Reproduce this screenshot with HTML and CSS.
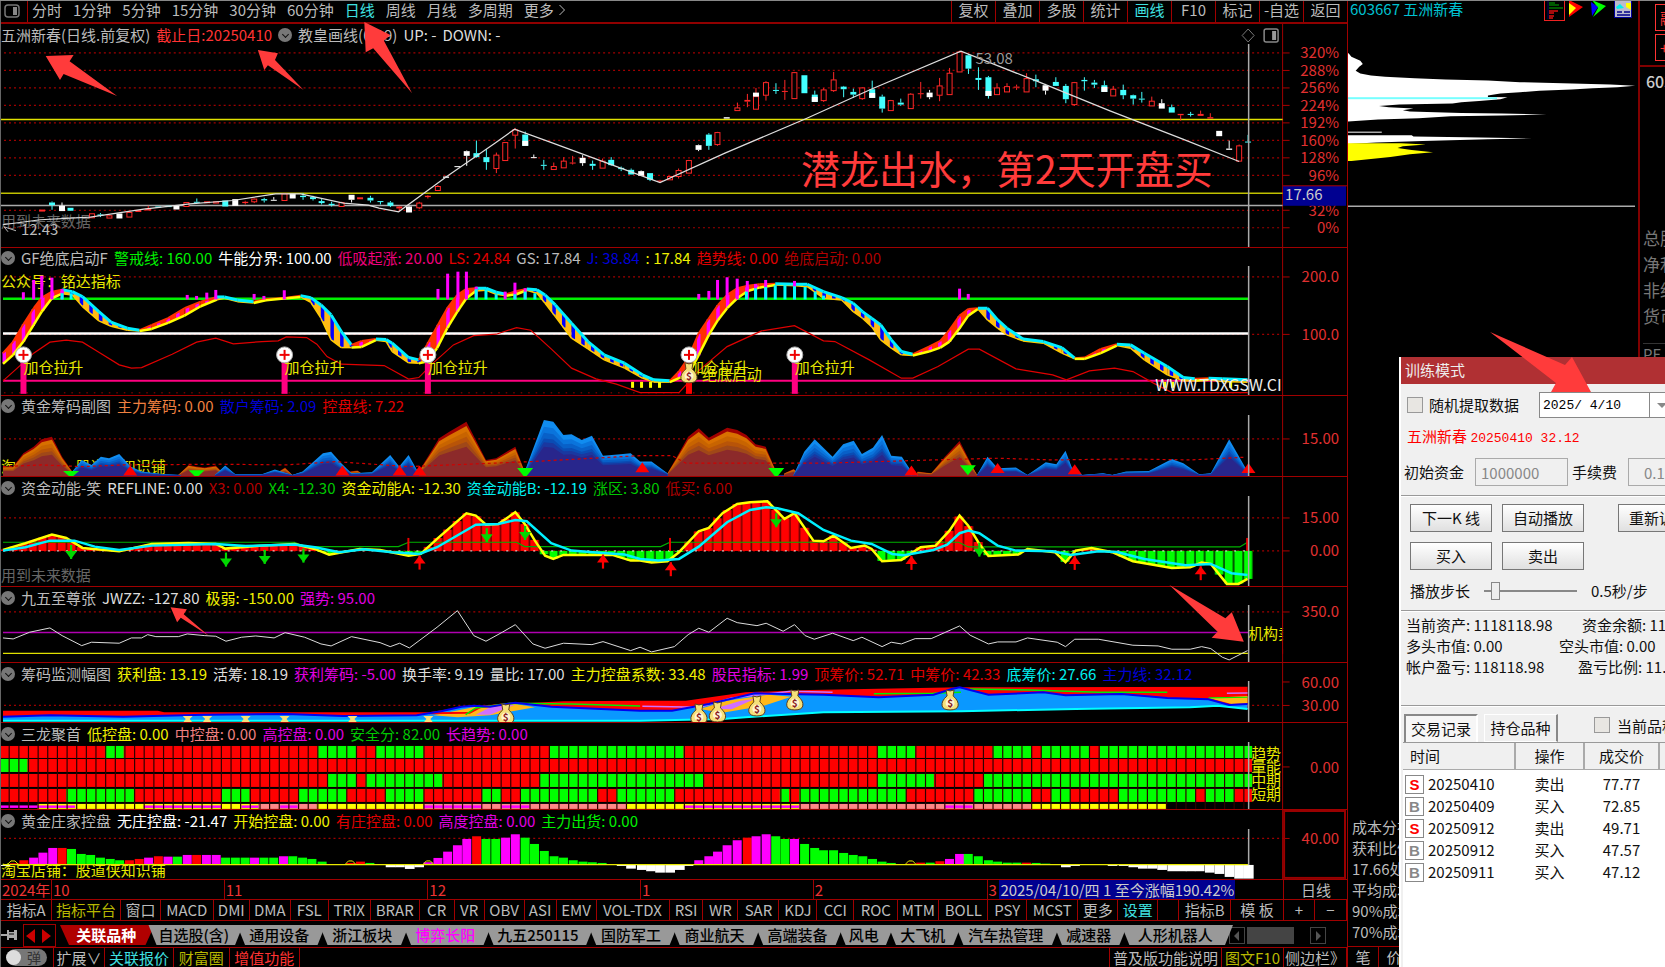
FILE: index.html
```html
<!DOCTYPE html>
<html lang="zh-CN">
<head>
<meta charset="utf-8">
<title>五洲新春 603667</title>
<link rel="stylesheet" href="styles.css">
</head>
<body>
<div class="app">
  <main class="main">
    <nav class="toolbar">
      <button class="tool-icon" aria-label="侧栏"><svg width="16" height="14" viewBox="0 0 16 14"><rect x="1" y="1" width="14" height="12" rx="3" fill="none" stroke="#777" stroke-width="1.5"/><rect x="9" y="3" width="4" height="8" fill="#888"/></svg></button>
      <div class="periods">
        <button>分时</button><button>1分钟</button><button>5分钟</button><button>15分钟</button><button>30分钟</button><button>60分钟</button><button class="c-cyan">日线</button><button>周线</button><button>月线</button><button>多周期</button><button class="more">更多<svg width="8" height="12" viewBox="0 0 8 12"><path d="M1.500 1 6.500 6 1.500 11" fill="none" stroke="#bbb"/></svg></button>
      </div>
      <div class="actions">
        <button>复权</button><button>叠加</button><button>多股</button><button>统计</button><button class="c-cyan">画线</button><button>F10</button><button>标记</button><button>-自选</button><button>返回</button>
      </div>
    </nav>
    <section class="panel p1">
      <header class="head"><span>五洲新春(日线.前复权)</span><span class="c-lred">截止日:20250410</span><button class="fold" aria-label="收起"></button><span>教皇画线(0,19)</span><span class="c-lite">UP: -</span><span class="c-lite">DOWN: -</span></header>
      <svg class="plot" id="plot1" viewBox="0 24 1348 224" preserveAspectRatio="none"></svg>
    </section>
    <section class="panel p2">
      <header class="head"><button class="fold" aria-label="收起"></button><span>GF绝底启动F</span><span class="c-green">警戒线: 160.00</span><span class="c-white">牛能分界: 100.00</span><span class="c-pink">低吸起涨: 20.00</span><span class="c-red">LS: 24.84</span><span>GS: 17.84</span><span class="c-blue">J: 38.84</span><span class="c-yellow">: 17.84</span><span class="c-red">趋势线: 0.00</span><span class="c-dred">绝底启动: 0.00</span></header>
      <svg class="plot" id="plot2" viewBox="0 248 1348 148" preserveAspectRatio="none"></svg>
    </section>
    <section class="panel p3">
      <header class="head"><button class="fold" aria-label="收起"></button><span>黄金筹码副图</span><span class="c-orange">主力筹码: 0.00</span><span class="c-blue">散户筹码: 2.09</span><span class="c-red">控盘线: 7.22</span></header>
      <svg class="plot" id="plot3" viewBox="0 396 1348 82" preserveAspectRatio="none"></svg>
    </section>
    <section class="panel p4">
      <header class="head"><button class="fold" aria-label="收起"></button><span>资金动能-笑</span><span class="c-lite">REFLINE: 0.00</span><span class="c-dred">X3: 0.00</span><span class="c-dgreen">X4: -12.30</span><span class="c-yellow">资金动能A: -12.30</span><span class="c-aqua">资金动能B: -12.19</span><span class="c-dgreen">涨区: 3.80</span><span class="c-dred">低买: 6.00</span></header>
      <svg class="plot" id="plot4" viewBox="0 478 1348 110" preserveAspectRatio="none"></svg>
    </section>
    <section class="panel p5">
      <header class="head"><button class="fold" aria-label="收起"></button><span>九五至尊张</span><span class="c-lite">JWZZ: -127.80</span><span class="c-yellow">极弱: -150.00</span><span class="c-purple">强势: 95.00</span></header>
      <svg class="plot" id="plot5" viewBox="0 588 1348 76" preserveAspectRatio="none"></svg>
    </section>
    <section class="panel p6">
      <header class="head"><button class="fold" aria-label="收起"></button><span>筹码监测幅图</span><span class="c-yellow">获利盘: 13.19</span><span class="c-lite">活筹: 18.19</span><span class="c-purple">获利筹码: -5.00</span><span class="c-lite">换手率: 9.19</span><span class="c-lite">量比: 17.00</span><span class="c-yellow">主力控盘系数: 33.48</span><span class="c-purple">股民指标: 1.99</span><span class="c-red">顶筹价: 52.71</span><span class="c-red">中筹价: 42.33</span><span class="c-aqua">底筹价: 27.66</span><span class="c-blue">主力线: 32.12</span></header>
      <svg class="plot" id="plot6" viewBox="0 664 1348 60" preserveAspectRatio="none"></svg>
    </section>
    <section class="panel p7">
      <header class="head"><button class="fold" aria-label="收起"></button><span>三龙聚首</span><span class="c-yellow">低控盘: 0.00</span><span class="c-salmon">中控盘: 0.00</span><span class="c-purple">高控盘: 0.00</span><span class="c-dgreen">安全分: 82.00</span><span class="c-purple">长趋势: 0.00</span></header>
      <svg class="plot" id="plot7" viewBox="0 724 1348 87" preserveAspectRatio="none"></svg>
    </section>
    <section class="panel p8">
      <header class="head"><button class="fold" aria-label="收起"></button><span>黄金庄家控盘</span><span class="c-white">无庄控盘: -21.47</span><span class="c-yellow">开始控盘: 0.00</span><span class="c-red">有庄控盘: 0.00</span><span class="c-purple">高度控盘: 0.00</span><span class="c-green">主力出货: 0.00</span></header>
      <svg class="plot" id="plot8" viewBox="0 811 1348 70" preserveAspectRatio="none"></svg>
    </section>
    <div class="timeline"><span>2024年</span><span>10</span><span>11</span><span>12</span><span>1</span><span>2</span><span>3</span><span class="date">2025/04/10/四 1 至今涨幅190.42%</span><span></span><span class="unit">日线</span></div>
    <nav class="indicators"><button>指标A</button><button class="c-dyellow">指标平台</button><button>窗口</button><button>MACD</button><button>DMI</button><button>DMA</button><button>FSL</button><button>TRIX</button><button>BRAR</button><button>CR</button><button>VR</button><button>OBV</button><button>ASI</button><button>EMV</button><button>VOL-TDX</button><button>RSI</button><button>WR</button><button>SAR</button><button>KDJ</button><button>CCI</button><button>ROC</button><button>MTM</button><button>BOLL</button><button>PSY</button><button>MCST</button><button>更多</button><button class="c-cyan">设置</button><span></span><button>指标B</button><button>模 板</button><button>+</button><button>−</button></nav>
    <nav class="sheets">
      <button class="pin" aria-label="固定"><svg width="18" height="14" viewBox="0 0 18 14"><path d="M0 7H6" stroke="#aaa" stroke-width="2"/><path d="M6 2H8V4H13V2H16V12H13V10H8V12H6Z" fill="#aaa"/><path d="M8 6H13" stroke="#000"/></svg></button>
      <button class="nav-arrows" aria-label="翻页"><svg width="30" height="16" viewBox="0 0 30 16"><path d="M11 1V15L2 8ZM18 1V15L27 8Z" fill="#c00"/></svg></button>
      <div class="sheet-list"><button class="active">关联品种</button><button>自选股(含)</button><button>通用设备</button><button>浙江板块</button><button class="hot">博弈长阳</button><button>九五250115</button><button>国防军工</button><button>商业航天</button><button>高端装备</button><button>风电</button><button>大飞机</button><button>汽车热管理</button><button>减速器</button><button>人形机器人</button></div>
      <div class="scroller"><button aria-label="左移"><svg width="8" height="10" viewBox="0 0 8 10"><path d="M6 0V10L1 5Z" fill="#555"/></svg></button><i class="thumb"></i><button class="right" aria-label="右移"><svg width="8" height="10" viewBox="0 0 8 10"><path d="M2 0V10L7 5Z" fill="#555"/></svg></button></div>
    </nav>
    <footer class="bottom"><label class="toggle"><input type="checkbox"><span>弹</span></label><button>扩展∨</button><button class="c-cyan">关联报价</button><button class="c-dyellow">财富圈</button><button class="c-lred">增值功能</button><span></span><button>普及版功能说明</button><button class="c-dyellow">图文F10</button><button>侧边栏》</button></footer>
  </main>

  <aside class="chips">
    <header class="chips-head"><span>603667 五洲新春</span>
      <span class="chip-icons">
        <svg width="21" height="21" viewBox="0 0 21 21"><rect x=".5" y=".5" width="20" height="20" fill="#000" stroke="#e22"/><path d="M4 1V19" stroke="#006"/><path d="M5 3H11M5 5H15M5 8H19" stroke="#070" stroke-width="1.500"/><path d="M5 11H14M5 13H10M5 16H10M5 18H9" stroke="#d11" stroke-width="1.500"/></svg>
        <svg width="15" height="17" viewBox="0 0 15 17"><path d="M1 0 15 7 1 17Z" fill="#f00"/><path d="M1 3 8 8 1 15Z" fill="#ff0"/></svg>
        <svg width="15" height="17" viewBox="0 0 15 17"><path d="M1 0 15 6 2 17 7 8Z" fill="#0f0"/><path d="M0 2 7 7 1 16Z" fill="#00f"/></svg>
        <svg width="18" height="18" viewBox="0 0 18 18"><path d="M0 0H18V18H0Z" fill="#bbc"/><path d="M0 0H18V18H0Z" fill="none" stroke="#009" stroke-width="2"/><path d="M2 7 6 4 10 8 3 9Z" fill="#0ee"/><path d="M12 3H17V10L12 7Z" fill="#ff0"/><path d="M3 12H8M10 12H16M3 15H16" stroke="#008" stroke-width="1.500"/></svg>
      </span>
    </header>
    <svg class="chip-plot" id="chips" viewBox="1348 24 292 790" preserveAspectRatio="none"></svg>
    <div class="stats"><p>成本分布</p><p>获利比例</p><p>17.66处</p><p>平均成本</p><p>90%成本</p><p>70%成本</p></div>
    <div class="chip-foot"><button>笔</button><button>价</button></div>
  </aside>

  <aside class="quote">
    <div class="quote-top"><button>融</button><button>+</button></div>
    <p class="code">603667</p>
    <div class="facts"><p>总股本</p><p>净利润</p><p>非经常</p><p>货币</p></div>
    <p class="pe">PE</p>
  </aside>

  <svg class="notes" id="notes" viewBox="0 0 1665 967" preserveAspectRatio="none"></svg>

  <section class="dialog" aria-label="训练模式">
    <h1>训练模式</h1>
    <div class="inner">
      <div class="row row-date"><input type="checkbox" id="rnd"><label for="rnd">随机提取数据</label><input class="date-box" aria-label="日期" value="2025/ 4/10"><button class="drop" aria-label="选择日期"></button></div>
      <p class="stock">五洲新春 <b>20250410 32.12</b></p>
      <div class="row row-fund"><label for="fund">初始资金</label><input id="fund" class="num" value="1000000" disabled><label for="fee">手续费</label><input id="fee" class="num fee" value="0.1" disabled></div>
      <hr>
      <div class="buttons"><button>下一K 线</button><button>自动播放</button><button class="restart">重新训练</button><button>买入</button><button>卖出</button></div>
      <div class="row row-step"><label for="step">播放步长</label><input id="step" type="range" min="0" max="100" value="8"><span>0.5秒/步</span></div>
      <hr>
      <div class="sums"><p><span>当前资产: 1118118.98</span><span>资金余额: 1118118.98</span></p><p><span>多头市值: 0.00</span><span>空头市值: 0.00</span></p><p><span>帐户盈亏: 118118.98</span><span>盈亏比例: 11.81%</span></p></div>
      <hr>
      <div class="tabs"><button class="on">交易记录</button><button>持仓品种</button><input type="checkbox" id="cur"><label for="cur">当前品种</label></div>
    </div>
    <div class="records">
      <table>
        <thead><tr><th>时间</th><th>操作</th><th>成交价</th><th></th></tr></thead>
        <tbody>
          <tr><td><i class="s">S</i>20250410</td><td>卖出</td><td>77.77</td><td></td></tr>
          <tr><td><i>B</i>20250409</td><td>买入</td><td>72.85</td><td></td></tr>
          <tr><td><i class="s">S</i>20250912</td><td>卖出</td><td>49.71</td><td></td></tr>
          <tr><td><i>B</i>20250912</td><td>买入</td><td>47.57</td><td></td></tr>
          <tr><td><i>B</i>20250911</td><td>买入</td><td>47.12</td><td></td></tr>
        </tbody>
      </table>
    </div>
  </section>
  <svg class="notes top" id="pointer" viewBox="0 0 1665 967" preserveAspectRatio="none"></svg>
</div>
<script src="charts.js"></script>
</body>
</html>
```
FILE: styles.css
```css
* { box-sizing: border-box; }
html, body { margin: 0; height: 100%; background: #000; }
body { font: 15px/20px "Noto Sans CJK SC", sans-serif; color: #bbb; overflow: hidden; }
button { font: inherit; color: inherit; background: none; border: 0; padding: 0; margin: 0; white-space: nowrap; }
p { margin: 0; }
svg { display: block; }

.app { position: relative; display: grid; grid-template-columns: minmax(0, 1fr) 292px 25px; height: 100vh; min-height: 600px; overflow: hidden; }
.app::after { content: ""; position: absolute; left: 0; right: 0; top: 0; height: 1px; background: #888; }
.main { display: flex; flex-direction: column; min-width: 0; min-height: 0; border-right: 1px solid #a00000; border-left: 1px solid #666; overflow: hidden; }

.c-cyan { color: #3fe0e0; } .c-aqua { color: #00f0f0; } .c-lred { color: #f33; } .c-red { color: #e00000; }
.c-dred { color: #b00000; } .c-green { color: #00f000; } .c-dgreen { color: #00c800; } .c-white { color: #fff; }
.c-lite { color: #ddd; } .c-pink { color: #f0007c; } .c-blue { color: #0000d8; } .c-yellow { color: #f0f000; }
.c-dyellow { color: #b8b800; } .c-orange { color: #f08040; } .c-purple { color: #e000e0; } .c-salmon { color: #f08080; }

.toolbar { flex: 0 0 24px; display: flex; border-bottom: 2px solid #900000; line-height: 20px; }
.toolbar button { height: 20px; }
.toolbar .tool-icon { height: 22px; width: 27px; padding-left: 3px; border-right: 1px solid #a00000; }
.periods { flex: 1; display: flex; gap: 11px; padding-left: 4px; min-width: 0; overflow: hidden; }
.more { display: flex; align-items: center; gap: 4px; }
.actions { display: grid; grid-template-columns: repeat(9, 44px); }
.toolbar .actions button { height: 22px; padding-bottom: 2px; border-left: 1px solid #a00000; }

.panel { position: relative; min-height: 0; overflow: hidden; }
.panel::after { content: ""; position: absolute; left: 0; right: 0; bottom: 0; height: 1px; background: #a00000; }
.p1 { flex: 224 1 0; } .p2 { flex: 148 1 0; } .p3 { flex: 82 1 0; } .p4 { flex: 110 1 0; }
.p5 { flex: 76 1 0; } .p6 { flex: 60 1 0; } .p7 { flex: 87 1 0; } .p8 { flex: 70 1 0; }
.plot { width: 100%; height: 100%; }
.head { position: absolute; left: 0; top: 0; display: flex; align-items: center; gap: 6px; height: 21px; white-space: nowrap; }
.fold { width: 14px; height: 14px; border-radius: 50%; background: #777; position: relative; }
.fold::after { content: ""; position: absolute; left: 5px; top: 4px; width: 4px; height: 4px; border: solid #111; border-width: 0 1px 1px 0; transform: rotate(45deg); }

.timeline { flex: 0 0 20px; display: grid; grid-template-columns: 50fr 173fr 204fr 213fr 173fr 174fr 12fr 237fr 48fr 64fr; color: #e33; line-height: 19px; white-space: nowrap; border-bottom: 1px solid #a00000; }
.timeline > span { min-width: 0; border-left: 1px solid #a00000; padding-left: 1px; }
.timeline > span:first-child { border: 0; }
.timeline .date { background: #000090; color: #ccc; border: 0; text-align: center; }
.timeline > span:nth-child(9) { border: 0; }
.timeline .unit { color: #bbb; text-align: center; }

.indicators { flex: 0 0 21px; display: grid; grid-template-columns: 51fr 69fr 40fr 53fr 36fr 41fr 38fr 42fr 49fr 35fr 30fr 40fr 32fr 40fr 73fr 34fr 35fr 41fr 38fr 37fr 44fr 41fr 49fr 39fr 51fr 40fr 40fr 21fr 52fr 53fr 31fr 32fr; border-bottom: 1px solid #a00000; }
.indicators > * { min-width: 0; border-right: 1px solid #a00000; overflow: hidden; display: flex; justify-content: center; line-height: 20px; }

.sheets { flex: 0 0 27px; display: flex; align-items: center; border-bottom: 1px solid #a00000; padding-top: 2px; }
.pin { width: 22px; }
.nav-arrows { width: 33px; height: 23px; border: 1px solid #a00000; padding-top: 1px; }
.sheet-list { flex: 1158; display: grid; grid-template-columns: 86fr 88fr 82fr 83fr 82fr 102fr 83fr 83fr 82fr 50fr 67fr 98fr 67fr 105fr; min-width: 0; margin: 0 4px; }
.sheet-list button { height: 20px; margin-right: -8px; padding-right: 2px; background: #999; color: #000; font-weight: 500; line-height: 20px; clip-path: polygon(0 0, 100% 0, calc(100% - 9px) 100%, 9px 100%); display: flex; justify-content: center; min-width: 0; position: relative; }
.sheet-list button + button { clip-path: polygon(2px 0, 100% 0, calc(100% - 8px) 100%, 10px 100%); }
.sheet-list .active { background: #b00000; color: #fff; font-weight: 700; }
.sheet-list .hot { color: #f0f; }
.scroller { flex: 0 0 118px; display: flex; align-items: center; gap: 2px; }
.scroller button { width: 16px; height: 17px; border: 1px solid #444; padding: 3px; }
.scroller .thumb { width: 47px; height: 17px; background: #444; }
.scroller .right { margin-left: 14px; }

.bottom { flex: 0 0 19px; display: grid; grid-template-columns: 53fr 51fr 69fr 56fr 70fr 811fr 112fr 62fr 63fr; }
.bottom > * { border-right: 1px solid #a00000; display: flex; justify-content: center; min-width: 0; line-height: 20px; height: 19px; }
.toggle { position: relative; align-items: center; }
.toggle input { position: absolute; left: 5px; top: 2px; appearance: none; margin: 0; width: 15px; height: 15px; border-radius: 50%; background: #ddd; }
.toggle span { width: 40px; height: 17px; border-radius: 9px; background: #777; color: #333; font-size: 14px; line-height: 17px; padding-left: 20px; }

.chips { display: flex; flex-direction: column; min-width: 0; border-right: 2px solid #800000; overflow: hidden; }
.chips-head { flex: 0 0 24px; display: flex; justify-content: space-between; padding-left: 2px; color: #00c0d0; line-height: 18px; }
.chip-icons { display: flex; gap: 8px; padding-right: 6px; }
.chip-icons svg:first-child { margin-right: -5px; }
.chip-plot { flex: 1; min-height: 0; width: 100%; }
.stats { padding-left: 4px; line-height: 21px; margin-bottom: 4px; }
.chip-foot { flex: 0 0 19px; display: flex; border-top: 1px solid #a00000; }
.chip-foot button { width: 31px; border-right: 1px solid #a00000; line-height: 20px; }
.quote { overflow: hidden; white-space: nowrap; color: #777; }
.quote-top { height: 67px; padding: 4px 0 0 15px; border-bottom: 2px solid #800000; }
.quote-top button { display: block; width: 30px; height: 27px; margin-bottom: 3px; border: 1px solid #f33; color: #f33; padding: 0 4px; text-align: left; }
.code { color: #ccc; padding: 4px 0 0 6px; font-size: 16px; font-weight: 500; }
.facts { padding: 134px 0 0 3px; font-size: 17px; line-height: 26px; margin-bottom: 14px; }
.pe { border-top: 1px solid #333; margin-left: 3px; }

.notes { position: absolute; left: 0; top: 0; width: 100%; height: 100%; pointer-events: none; }

.dialog { position: absolute; right: 0; top: 357px; bottom: 0; width: 266px; background: #f0f0f0; color: #111; overflow: hidden; border-left: 2px solid #fff; display: flex; flex-direction: column; }
.dialog h1 { margin: 0 0 0 -2px; padding-left: 6px; height: 27px; background: #b03033; color: #eee; font: 15px/26px "Noto Sans CJK SC", sans-serif; }
.inner { white-space: nowrap; padding-left: 2px; }
.dialog input { font: 15px/20px "Noto Sans CJK SC", sans-serif; margin: 0; }
.dialog input[type=checkbox] { appearance: none; flex: none; width: 16px; height: 16px; background: #e8e6e2; border: 1px solid #999; }
.row { display: flex; align-items: center; }
.row-date { padding: 8px 0 0 4px; gap: 6px; height: 34px; }
.dialog .date-box { margin-left: 14px; flex: none; width: 111px; height: 26px; border: 1px solid #888; padding: 0 3px; font: 13px/20px "Liberation Mono", monospace; }
.drop { flex: none; width: 26px; height: 26px; background: #fff; border: 1px solid #888; margin-left: -7px; padding: 0 0 0 7px; }
.drop::after { content: ""; display: block; width: 0; border: 5px solid transparent; border-top-color: #888; margin-top: 5px; }
.stock { color: #f00; padding: 8px 0 0 4px; }
.stock b { font: 13px/20px "Liberation Mono", monospace; }
.row-fund { gap: 4px; padding: 9px 0 0 1px; }
.dialog .num { flex: none; width: 93px; height: 28px; margin: 0 0 0 7px; border: 1px solid #aaa; background: #f0f0f0; color: #888; padding: 0 5px; }
.dialog .fee { padding-left: 15px; }
hr { margin: 9px 0 0 -2px; border: 0; border-top: 1px solid #999; border-bottom: 1px solid #fff; }
.buttons { display: grid; grid-template-columns: 82px 82px 82px; gap: 10px; padding: 7px 0 0 7px; }
.buttons button { height: 28px; border: 1px solid #777; background: linear-gradient(#fff, #e0e0e0); }
.buttons .restart { margin-left: 24px; margin-right: -24px; }
.row-step { height: 36px; padding: 5px 0 0 7px; gap: 14px; }
.row-step input { appearance: none; width: 93px; height: 18px; background: linear-gradient(#888, #888) center / 100% 2px no-repeat; }
.row-step input::-webkit-slider-thumb { appearance: none; width: 9px; height: 18px; background: #eee; border: 1px solid #888; }
.row-step + hr { margin-top: 4px; }
.sums { padding: 2px 0 0 3px; line-height: 21px; }
.sums p { display: flex; justify-content: space-between; width: 278px; }
.sums span + span { width: 102px; }
.sums p:nth-child(2) span + span { width: 125px; }
.sums p:nth-child(3) span + span { width: 106px; }
.sums + hr { margin-top: 28px; }
.tabs { display: flex; align-items: flex-end; gap: 6px; padding: 7px 0 0 1px; }
.tabs button { flex: none; width: 74px; height: 28px; line-height: 20px; border: 1px solid #fff; border-right: 2px solid #888; }
.tabs .on { border: 2px solid #888; border-right-color: #fff; border-bottom: 0; background: #f6f6f6; }
.dialog .tabs input { margin: 0 0 9px 30px; }
.tabs label { margin: 0 0 6px 1px; }
.records { flex: 1; background: #fff; border-top: 1px solid #999; margin-left: 2px; }
table { border-collapse: collapse; table-layout: fixed; width: 282px; }
th { height: 26px; padding: 0; font-weight: 400; background: #f0f0f0; border-right: 2px solid #aaa; border-bottom: 1px solid #aaa; }
th:nth-child(1) { width: 112px; text-align: left; padding-left: 7px; }
th:nth-child(2) { width: 69px; } th:nth-child(3) { width: 75px; }
td { height: 22px; padding: 0; text-align: center; line-height: 22px; }
tbody tr:first-child td { height: 25px; padding-top: 3px; }
td:first-child { text-align: left; padding-left: 2px; }
td i { display: inline-block; width: 19px; height: 19px; margin-right: 4px; border: 1px solid #888; color: #888; text-align: center; font: 700 15px/17px "Liberation Sans", sans-serif; }
td i.s { color: #f00; }
```
FILE: charts.js
```js
const NS = 'http://www.w3.org/2000/svg';
const $ = id => document.getElementById(id);
function el(svg, name, attrs, text) {
  const e = document.createElementNS(NS, name);
  for (const k in attrs) e.setAttribute(k, attrs[k]);
  if (text) e.textContent = text;
  svg.appendChild(e);
  return e;
}
const r1 = v => Math.round(v * 10) / 10;
/* Chart blocks: each holds an origin and the units per pixel of its series. */
const block = (ox, kx, oy) => list => list.map(p => [r1(ox + p[0] / kx), ...p.slice(1).map(v => typeof v === 'number' ? r1(oy + v / 3) : v)]);
const str = pts => pts.map(p => p[0] + ',' + p[1]).join(' ');
const line = (s, pts, c, w, extra) => el(s, 'polyline', Object.assign({ points: str(pts), fill: 'none', stroke: c, 'stroke-width': w }, extra));
const rect = (s, x, y, w, h, c) => el(s, 'rect', { x: r1(x), y: r1(y), width: r1(w), height: r1(h), fill: c });
const seg = (s, x1, y1, x2, y2, c, w, d) => el(s, 'line', Object.assign({ x1, y1, x2, y2, stroke: c, 'stroke-width': w || 1 }, d ? { 'stroke-dasharray': d } : {}));
const text = (s, x, y, t, c, size, a) => el(s, 'text', { x, y, fill: c, 'font-size': size || 15, 'text-anchor': a || 'start' }, t);
const poly = (s, pts, c) => el(s, 'polygon', { points: str(pts), fill: c });
const AX = 1283.5, CUR = 1249.5;
function frame(s, top, bottom, ticks) {
  ticks.forEach(([y, label]) => {
    seg(s, 3, y, AX, y, '#a00000', 1.2, '2 3');
    seg(s, AX, y, AX + 7, y, '#a00', 1);
    if (label) text(s, 1340, y + 5.5, label, '#e03030', 15, 'end');
  });
  seg(s, AX, top, AX, bottom, '#a00000', 1);
}
const cursor = (s, a, b) => seg(s, CUR, a, CUR, b, '#aaa', 1.5);
function bag(s, x, y) {
  el(s, 'path', { d: `M${x - 4} ${y - 11}Q${x} ${y - 9} ${x + 4} ${y - 11}L${x + 3} ${y - 5}Q${x + 9} ${y} ${x + 8} ${y + 5}Q${x + 7} ${y + 9} ${x} ${y + 9}Q${x - 7} ${y + 9} ${x - 8} ${y + 5}Q${x - 9} ${y} ${x - 3} ${y - 5}Z`, fill: '#f5e07a', stroke: '#60401a' });
  el(s, 'circle', { cx: x, cy: y + 2, r: 4.5, fill: '#fff3d0' });
  el(s, 'text', { x, y: y + 6, fill: '#8a2020', 'font-size': 10, 'font-weight': 700, 'text-anchor': 'middle' }, '$');
}
const interp = (pts, x, k) => {
  for (let i = 1; i < pts.length; i++) if (x <= pts[i][0]) {
    const a = pts[i - 1], b = pts[i];
    return a[k] + (b[k] - a[k]) * Math.max(0, (x - a[0]) / (b[0] - a[0] || 1));
  }
  return pts[pts.length - 1][k];
};

/* Panel 1: price */
{
  const s = $('plot1'), L = block(0, 2.8, 0), M = block(550, 2.8, 0), R = block(1105, 2.8, 0);
  frame(s, 24, 248, [[53, '320%'], [70.5, '288%'], [88, '256%'], [105.5, '224%'], [123, '192%'], [140.5, '160%'], [158, '128%'], [175.5, '96%'], [210.5, '32%'], [228, '0%']]);
  seg(s, 0, 119.5, AX, 119.5, '#e0e000', 1.5);
  seg(s, 0, 193.5, AX, 193.5, '#c0c000', 1.5);
  seg(s, 0, 205.7, AX, 205.7, '#aaa', 1.5);
  text(s, 0, 227, '用到未来数据', '#666');
  text(s, 20, 235, '12.43', '#bbb');
  line(s, [[15, 231], [3, 227], [7, 232]], '#bbb', 1);
  const candles = [...L([
    [115, 631, 631, 633, 633, 'r'], [143, 605, 608, 616, 630, 'c'], [171, 608, 618, 634, 634, 'w'], [195, 624, 624, 633, 633, 'c'], [255, 642, 642, 654, 654, 'r'], [279, 640, 644, 648, 652, 'c'], [304, 645, 648, 655, 655, 'r'], [332, 641, 641, 656, 656, 'w'], [360, 636, 638, 652, 652, 'r'], [385, 631, 632, 635, 635, 'r'], [413, 618, 626, 632, 632, 'f'], [441, 620, 620, 622, 622, 'c'], [470, 618, 618, 622, 622, 'c'], [492, 618, 618, 629, 629, 'w'], [520, 608, 608, 620, 620, 'r'], [549, 596, 606, 608, 608, 'c'], [578, 606, 606, 608, 608, 'r'], [603, 606, 606, 610, 610, 'r'], [629, 602, 602, 620, 620, 'c'], [657, 598, 598, 618, 618, 'w'], [685, 603, 606, 610, 614, 'f'], [710, 596, 598, 606, 610, 'r'], [738, 594, 598, 602, 608, 'c'], [765, 592, 600, 602, 602, 'w'], [795, 580, 582, 602, 602, 'r'], [818, 582, 582, 596, 596, 'w'], [847, 580, 588, 592, 600, 'c'], [875, 588, 592, 598, 602, 'c'], [899, 598, 604, 610, 614, 'c'], [927, 606, 612, 616, 620, 'c'], [955, 606, 608, 620, 620, 'r'], [983, 585, 585, 600, 608, 'w'], [1007, 594, 594, 596, 596, 'r'], [1036, 588, 594, 602, 608, 'c'], [1064, 604, 604, 606, 614, 'c'], [1092, 604, 608, 618, 622, 'c'], [1117, 618, 620, 626, 632, 'f'], [1144, 618, 620, 638, 638, 'w'], [1173, 606, 610, 624, 628, 'r'], [1197, 586, 588, 592, 596, 'f'], [1225, 556, 560, 572, 572, 'r'], [1248, 528, 530, 534, 534, 'w'], [1280, 499, 499, 502, 502, 'w'], [1306, 452, 454, 468, 498, 'w'], [1333, 422, 460, 472, 474, 'c'], [1361, 448, 472, 487, 510, 'c'], [1389, 458, 466, 506, 520, 'r'], [1414, 428, 428, 482, 482, 'r'], [1442, 384, 390, 406, 446, 'r'], [1470, 395, 404, 438, 438, 'x'], [1494, 464, 472, 474, 474, 'w'], [1522, 480, 495, 497, 510, 'c']
  ]), ...M([
    [10, 488, 500, 509, 509, 'r'], [38, 472, 484, 504, 504, 'r'], [63, 468, 488, 490, 494, 'f'], [91, 466, 474, 490, 498, 'w'], [119, 482, 492, 498, 510, 'c'], [147, 476, 484, 505, 505, 'r'], [171, 472, 480, 496, 498, 'c'], [199, 500, 504, 508, 514, 'c'], [227, 506, 510, 524, 524, 'c'], [255, 512, 514, 528, 528, 'w'], [280, 520, 520, 540, 544, 'c'], [308, 540, 542, 546, 546, 'f'], [336, 528, 530, 540, 540, 'r'], [360, 506, 512, 530, 536, 'r'], [389, 480, 482, 520, 520, 'r'], [416, 434, 436, 450, 454, 'w'], [445, 400, 404, 438, 450, 'c'], [469, 396, 398, 434, 438, 'r'], [495, 352, 352, 356, 356, 'w'], [525, 308, 324, 332, 332, 'r'], [553, 282, 300, 305, 322, 'f'], [577, 264, 290, 328, 328, 'r'], [577, 278, 278, 290, 290, 'w'], [605, 244, 248, 286, 302, 'r'], [633, 250, 270, 273, 282, 'c'], [658, 240, 273, 275, 300, 'f'], [685, 216, 218, 296, 296, 'r'], [713, 226, 226, 280, 280, 'c'], [742, 272, 284, 306, 306, 'x'], [767, 264, 270, 302, 306, 'r'], [795, 216, 240, 272, 276, 'r'], [823, 258, 260, 268, 292, 'c'], [850, 266, 276, 284, 294, 'c'], [875, 262, 264, 296, 300, 'r'], [903, 242, 268, 294, 294, 'x'], [931, 284, 290, 326, 338, 'c'], [955, 300, 302, 332, 332, 'r'], [983, 296, 308, 314, 318, 'c'], [1011, 280, 283, 326, 326, 'r'], [1039, 246, 280, 282, 296, 'f'], [1064, 270, 278, 292, 298, 'w'], [1092, 234, 258, 286, 304, 'r'], [1120, 204, 220, 284, 284, 'r'], [1148, 152, 156, 216, 216, 'r'], [1173, 162, 166, 206, 222, 'c'], [1201, 202, 234, 240, 270, 'c'], [1229, 228, 232, 288, 296, 'x'], [1253, 250, 264, 284, 284, 'r'], [1281, 250, 260, 276, 276, 'r'], [1308, 254, 260, 263, 270, 'f'], [1336, 220, 236, 276, 276, 'r'], [1362, 224, 238, 244, 262, 'c'], [1389, 252, 256, 272, 284, 'w'], [1418, 232, 246, 258, 258, 'c'], [1446, 252, 258, 298, 310, 'c'], [1470, 246, 248, 314, 318, 'r'], [1498, 232, 240, 244, 272, 'c'], [1526, 240, 248, 254, 264, 'c'], [1554, 242, 256, 276, 276, 'x']
  ]), ...R([
    [25, 258, 268, 288, 288, 'r'], [53, 254, 270, 286, 298, 'c'], [81, 284, 286, 296, 314, 'c'], [105, 276, 296, 298, 308, 'c'], [133, 290, 304, 318, 318, 'r'], [161, 298, 310, 326, 326, 'w'], [189, 314, 322, 338, 338, 'c'], [214, 342, 342, 346, 362, 'f'], [242, 336, 342, 345, 350, 'c'], [270, 332, 342, 348, 348, 'f'], [297, 340, 352, 356, 356, 'f'], [322, 393, 393, 409, 409, 'w'], [350, 422, 446, 450, 450, 'w'], [378, 434, 438, 484, 484, 'r'], [403, 405, 425, 428, 428, 'c']
  ])];
  const col = { r: '#ff2828', f: '#ff2828', c: '#4ff', w: '#fff', x: '#4ff' };
  candles.forEach(([x, h, a, b, l, t]) => {
    if (h < a) seg(s, x, h, x, a, col[t], 1);
    if (l > b) seg(s, x, b, x, l, col[t], 1);
    if (t === 'r') el(s, 'rect', { x: r1(x - 2.5), y: a, width: 5, height: Math.max(1, r1(b - a)), fill: '#000', stroke: col.r });
    else rect(s, x - 3, a, 6, Math.max(1, b - a), col[t]);
    if (t === 'x') rect(s, x - 3, b - 5, 6, 5, '#fff');
  });
  line(s, [...L([[5, 675], [110, 660], [250, 652], [400, 628], [530, 612], [650, 602], [770, 582], [840, 582], [960, 610], [1030, 616], [1060, 625], [1115, 636], [1250, 530], [1385, 430], [1440, 388]]), ...M([[0, 427], [160, 490], [308, 548], [490, 460], [720, 355], [900, 268], [1152, 154], [1370, 246], [1568, 332]]), ...R([[220, 418], [378, 485]])], '#ddd', 1.2);
  text(s, 976, 64, '53.08', '#999');
  cursor(s, 44, 248);
  el(s, 'path', { d: 'M1249 29 1255 35.500 1249 42 1243 35.500Z', fill: 'none', stroke: '#777' });
  el(s, 'rect', { x: 1265, y: 29, width: 14, height: 13, rx: 2, fill: 'none', stroke: '#888', 'stroke-width': 1.5 });
  rect(s, 1273, 31, 4, 9, '#999');
  rect(s, 1284, 186, 63, 20, '#000090');
  seg(s, 1284, 186, 1348, 186, '#a00', 1);
  text(s, 1286, 200, '17.66', '#ccc');
}

/* Panel 2: trend ribbon */
{
  const s = $('plot2'), L = block(0, 2.45, 245), R = block(640, 2.178, 245);
  frame(s, 248, 396, [[277, '200.0'], [334.5, '100.0']]);
  seg(s, 3, 393, CUR, 393, '#a00000', 1, '1.500 6');
  text(s, 0, 287, '公众号：铭达指标', '#e8e800');
  seg(s, 2, 298.7, CUR, 298.7, '#00f000', 2.5);
  seg(s, 2, 333.7, CUR, 333.7, '#fff', 2.5);
  seg(s, 2, 381, CUR, 381, '#ff0080', 2);
  const band = [...L([[5, 325, 357], [30, 290, 330], [55, 238, 290], [80, 190, 240], [100, 158, 200], [125, 140, 160], [150, 134, 146], [175, 140, 150], [200, 155, 185], [240, 200, 228], [270, 232, 244], [310, 250, 256], [340, 256, 258], [370, 240, 252], [410, 220, 234], [450, 190, 212], [490, 170, 184], [530, 156, 164], [548, 156, 160], [580, 165, 170], [620, 170, 174], [650, 162, 166], [700, 158, 160], [735, 152, 156], [760, 158, 172], [785, 180, 220], [810, 210, 285], [835, 260, 308], [860, 300, 308], [885, 288, 306], [920, 282, 286], [945, 284, 290], [960, 295, 320], [1000, 338, 354], [1025, 345, 355], [1045, 300, 350], [1070, 245, 310], [1095, 190, 250], [1120, 150, 200], [1142, 132, 160], [1165, 130, 138], [1190, 130, 136], [1215, 142, 148], [1240, 148, 152], [1265, 138, 148], [1290, 132, 136], [1315, 134, 145], [1335, 150, 175], [1360, 180, 215], [1400, 235, 280], [1440, 290, 312], [1480, 330, 345], [1530, 355, 370]]),
    ...R([[5, 390, 400], [30, 405, 412], [65, 408, 412], [85, 380, 400], [105, 340, 390], [128, 265, 330], [150, 220, 270], [170, 180, 225], [190, 150, 190], [212, 130, 160], [235, 122, 138], [260, 118, 128], [295, 116, 120], [340, 118, 122], [365, 118, 125], [400, 140, 160], [440, 158, 165], [465, 175, 200], [485, 200, 220], [505, 220, 245], [525, 240, 285], [548, 285, 310], [570, 320, 330], [595, 328, 332], [630, 305, 320], [655, 288, 308], [675, 255, 290], [697, 212, 250], [716, 192, 212], [737, 190, 192], [758, 190, 225], [780, 225, 250], [800, 250, 270], [835, 282, 288], [880, 290, 295], [920, 308, 325], [948, 340, 342], [970, 338, 342], [1005, 312, 325], [1040, 298, 302], [1070, 300, 310], [1100, 325, 345], [1150, 365, 390], [1185, 398, 408], [1210, 402, 408], [1240, 400, 405], [1270, 402, 410], [1325, 405, 412]])];
  const up = i => band[i][1] < band[i - 1][1];
  for (let i = 1; i < band.length; i++) {
    const a = band[i - 1], b = band[i];
    poly(s, [[a[0], a[1]], [b[0], b[1]], [b[0], b[2]], [a[0], a[2]]], up(i) ? '#ff3000' : '#ffb818');
  }
  for (let x = 3; x < CUR; x += 9.66) {
    const i = Math.max(1, band.findIndex(p => p[0] >= x));
    rect(s, x - 1.5, interp(band, x, 1), 3.5, interp(band, x, 2) - interp(band, x, 1), up(i) ? '#f0f' : '#00f');
  }
  for (let i = 1; i < band.length; i++) {
    const a = band[i - 1], b = band[i];
    if (up(i)) { seg(s, a[0], a[1], b[0], b[1], '#ff3000', 2); seg(s, a[0], a[2], b[0], b[2], '#ff0', 2.5); }
    else { seg(s, a[0], a[2], b[0], b[2], '#fc0', 1.5); seg(s, a[0], a[1], b[0], b[1], '#00f0ff', 3); }
  }
  [...L([[55, 142], [80, 105], [100, 92], [125, 98], [150, 132], [457, 150], [480, 153], [505, 143], [527, 135], [621, 147], [645, 153], [695, 136], [1072, 132], [1096, 86], [1121, 80], [1142, 80], [1166, 125], [1237, 140], [1261, 113], [1286, 130]]), ...R([[128, 147], [150, 138], [169, 105], [190, 97], [212, 101], [234, 108], [252, 117], [274, 105], [337, 108], [697, 131], [716, 147]])].forEach(p => rect(s, p[0] - 1.5, p[1], 3, 299.5 - p[1], '#f0f'));
  [...L([[150, 145], [172, 145], [1166, 133], [1190, 135], [1215, 148], [1261, 148], [1286, 140], [1310, 145]]), ...R([[232, 140], [252, 130], [274, 126], [295, 121], [316, 121], [337, 124], [360, 126], [382, 140], [400, 152]])].forEach(p => rect(s, p[0] - 1.5, p[1], 3, 299.5 - p[1], '#0ff'));
  line(s, [...L([[5, 408], [40, 370], [80, 325], [120, 292], [160, 286], [200, 292], [240, 322], [290, 360], [320, 370], [345, 368], [420, 328], [480, 292], [527, 280], [570, 297], [640, 290], [680, 288], [700, 276], [750, 278], [775, 298], [800, 335], [835, 358], [940, 362], [1000, 403], [1025, 398], [1060, 355], [1110, 300], [1160, 272], [1215, 268], [1265, 248], [1300, 256], [1350, 312], [1400, 370], [1460, 402], [1510, 418], [1568, 443]]), ...R([[85, 443], [130, 375], [190, 305], [265, 258], [337, 242], [400, 288], [425, 290], [500, 345], [570, 400], [595, 400], [650, 365], [716, 313], [740, 313], [820, 372], [900, 390], [930, 405], [980, 378], [1035, 370], [1075, 380], [1120, 415], [1160, 443], [1325, 443]])], '#e00000', 1.2);
  [631, 640, 649, 658, 1164, 1172, 1230].forEach(x => rect(s, x, 382, 3, 6, '#ff0'));
  [[22.5, '#ff0080'], [284, '#ff0080'], [427.5, '#ff0080'], [689, '#f00'], [795, '#ff0080']].forEach(([x, c]) => {
    rect(s, x - 3, 355, 6, 39, c);
    text(s, x, 373, '加仓拉升', '#e8e800');
    el(s, 'circle', { cx: x, cy: 355, r: 8, fill: '#fff', stroke: '#aaa' });
    seg(s, x - 5, 355, x + 5, 355, '#e00', 2);
    seg(s, x, 350, x, 360, '#e00', 2);
  });
  text(s, 702, 380, '绝底启动', '#e8e800');
  bag(s, 689, 374);
  text(s, 1156, 391, 'WWW.TDXGSW.CI', '#eee', 16);
  cursor(s, 266, 396);
}

/* Panel 3: chip areas */
{
  const s = $('plot3'), L = block(0, 2.45, 245), R = block(640, 2.178, 245), base = 476;
  frame(s, 396, 478, [[439, '15.00']]);
  text(s, 0, 472, '淘宝店铺：股道侠知识铺', '#e0e000');
  rect(s, 2, 475, 1248, 2, '#28268c');
  const warm = [[1, '#a00000'], [.92, '#d87000'], [.82, '#c86400'], [.72, '#b85408'], [.63, '#a04818'], [.54, '#8c2a2a']];
  const cold = [[1, '#108cf0'], [.88, '#0a74dc'], [.77, '#0860c8'], [.67, '#0a4cb4'], [.6, '#1a38a0'], [.52, '#28268c']];
  const hill = (pts, shades) => shades.forEach(([k, c]) => poly(s, [[pts[0][0], base], ...pts.map(p => [p[0], r1(base - (base - p[1]) * k)]), [pts[pts.length - 1][0], base]], c));
  [L([[5, 665], [30, 665], [55, 625], [80, 605], [100, 583], [125, 575], [150, 635], [175, 680]]), L([[435, 690], [460, 660], [480, 665], [500, 668], [527, 662], [545, 685]]), L([[675, 685], [697, 668], [715, 690]]), L([[855, 680], [875, 677], [890, 690]]), L([[1025, 680], [1050, 630], [1075, 580], [1100, 560], [1142, 530], [1190, 645], [1215, 640], [1262, 605], [1285, 680]]), R([[60, 685], [85, 625], [105, 575], [128, 550], [150, 578], [190, 548], [212, 555], [232, 570], [252, 598], [274, 605], [300, 690]]), R([[315, 685], [335, 672], [350, 690]]), R([[605, 680], [635, 685], [665, 635], [697, 588], [716, 640], [735, 690]])].forEach(p => hill(p, warm));
  [L([[175, 680], [198, 645], [222, 660], [245, 635], [265, 640], [290, 627], [318, 665], [345, 680], [400, 688], [440, 690]]), L([[525, 690], [550, 662], [575, 688], [640, 688], [672, 674], [715, 690], [740, 680], [790, 625], [810, 620], [835, 655], [860, 685], [910, 682], [955, 630], [977, 665], [1000, 630], [1025, 685]]), [...L([[1285, 680], [1300, 630], [1332, 525], [1355, 530], [1380, 570], [1400, 568], [1425, 585], [1450, 572], [1477, 632], [1520, 628], [1545, 625]]), ...R([[0, 650], [25, 650], [60, 685]])], R([[335, 690], [358, 620], [381, 583], [420, 635], [443, 598], [466, 587], [484, 627], [508, 608], [528, 570], [548, 632], [571, 635], [592, 680]]), R([[735, 690], [758, 635], [780, 670], [820, 668], [845, 690], [885, 652], [908, 658], [928, 617], [945, 680], [965, 690], [1010, 685], [1030, 690], [1060, 680], [1110, 678], [1160, 642], [1185, 655], [1220, 688], [1245, 685], [1285, 583], [1325, 680]])].forEach(p => hill(p, cold));
  line(s, [...L([[5, 665], [100, 660], [200, 665], [300, 660], [540, 658], [700, 660], [820, 650], [1000, 665], [1300, 650], [1568, 632]]), ...R([[70, 632], [100, 655], [400, 655], [640, 645], [780, 640], [900, 645], [1060, 642], [1200, 645], [1320, 637]])], '#d00000', 1.2, { 'stroke-dasharray': '3 3' });
  [...L([[317, 692], [838, 692], [978, 692], [1027, 692]]), ...R([[5, 682], [592, 692], [780, 684], [948, 688], [1327, 684]])].forEach(([x, y]) => poly(s, [[x - 7, y], [x + 7, y], [x, y - 10]], '#f00'));
  [...L([[172, 678], [480, 676], [1286, 669]]), ...R([[297, 669], [715, 661]])].forEach(([x, y]) => poly(s, [[x - 8, y], [x + 8, y], [x, Math.min(y + 10, 478)]], '#0f0'));
  cursor(s, 415, 477);
}

/* Panel 4: fund momentum */
{
  const s = $('plot4'), L = block(0, 2.45, 475), R = block(640, 2.178, 475);
  frame(s, 478, 588, [[519, '15.00'], [552, '0.00']]);
  text(s, 0, 582, '用到未来数据', '#666');
  const y = [...L([[5, 228], [60, 208], [125, 182], [160, 192], [200, 222], [290, 232], [370, 210], [460, 207], [527, 210], [550, 224], [640, 215], [720, 210], [770, 225], [805, 242], [880, 225], [930, 228], [1000, 245], [1030, 240], [1070, 195], [1142, 118], [1165, 125], [1190, 152], [1220, 150], [1262, 115], [1285, 150], [1310, 200], [1335, 245], [1355, 255], [1380, 243], [1500, 243], [1545, 260]]), ...R([[0, 260], [25, 266], [60, 262], [85, 235], [128, 172], [150, 162], [180, 118], [212, 90], [240, 85], [278, 82], [315, 135], [337, 118], [378, 200], [400, 202], [422, 185], [460, 222], [490, 215], [505, 225], [528, 262], [570, 258], [612, 220], [645, 215], [675, 170], [697, 125], [716, 155], [740, 210], [760, 246], [825, 242], [845, 225], [905, 235], [928, 265], [950, 230], [985, 222], [1030, 235], [1075, 262], [1160, 282], [1200, 280], [1225, 266], [1245, 270], [1280, 330], [1305, 330], [1325, 315]])];
  for (let x = 3; x <= 1250; x += 9.66) {
    const v = interp(y, x, 1);
    if (v < 552) { rect(s, x - 4.8, v, 9.6, 552 - v, '#a00000'); rect(s, x - 4, v, 7.5, 552 - v, '#f00'); }
    else { rect(s, x - 4.8, 552, 9.6, v - 552, '#007000'); rect(s, x - 4, 552, 7.5, v - 552, '#0f0'); }
  }
  seg(s, 2, 552, CUR, 552, '#eee', 1, '2 7');
  line(s, [...L([[5, 205], [720, 205], [745, 218], [975, 218], [1000, 205], [1265, 205], [1285, 218], [1568, 218]]), ...R([[45, 218], [65, 205], [695, 205], [716, 219], [1308, 219], [1325, 205]])], '#00b000', 1.2);
  [408, 670, 1248].forEach(x => seg(s, x, 539, x, 552, '#e00', 2));
  line(s, y, '#ff0', 2.5);
  line(s, [...L([[5, 230], [60, 220], [120, 200], [180, 200], [230, 218], [290, 228], [370, 215], [527, 210], [600, 216], [720, 212], [770, 220], [830, 235], [890, 226], [960, 235], [1027, 240], [1070, 220], [1165, 152], [1220, 150], [1262, 138], [1290, 142], [1350, 208], [1400, 230], [1460, 236], [1530, 242], [1568, 255]]), ...R([[40, 260], [85, 255], [128, 218], [190, 145], [240, 108], [275, 100], [300, 103], [345, 118], [400, 168], [460, 200], [505, 210], [550, 240], [575, 244], [640, 228], [670, 212], [697, 178], [716, 170], [740, 178], [780, 215], [820, 230], [900, 232], [940, 243], [1000, 232], [1040, 234], [1100, 255], [1190, 274], [1245, 270], [1290, 298], [1325, 303]])], '#00f0ff', 2.5);
  const arrow = (x, t, d, c) => { seg(s, x, t, x, t - d * 14, c, 2.2); poly(s, [[x, t], [x - 6, t - d * 8], [x + 6, t - d * 8]], c); };
  [...L([[172, 255], [552, 278], [647, 270], [742, 266], [1192, 205], [1286, 198]]), ...R([[297, 160], [740, 248]])].forEach(p => arrow(p[0], p[1], 1, '#00d800'));
  [...L([[1027, 245], [1477, 242]]), ...R([[67, 265], [592, 246], [948, 246], [1223, 277]])].forEach(p => arrow(p[0], p[1], -1, '#f00'));
  cursor(s, 497, 588);
}

/* Panel 5: strength */
{
  const s = $('plot5'), L = block(0, 2.45, 475), R = block(640, 2.178, 475);
  frame(s, 588, 664, [[613, '350.0']]);
  seg(s, 2, 633.5, CUR, 633.5, '#b000b0', 1.5);
  seg(s, 2, 654.5, CUR, 654.5, '#e0e000', 1.2);
  line(s, [...L([[5, 492], [30, 495], [70, 475], [120, 462], [150, 485], [198, 515], [222, 505], [290, 508], [320, 492], [345, 492], [360, 482], [380, 488], [435, 488], [457, 480], [500, 485], [527, 487], [552, 502], [590, 490], [625, 486], [670, 492], [697, 476], [745, 490], [785, 510], [810, 516], [860, 488], [930, 506], [955, 518], [978, 508], [1002, 522], [1070, 460], [1120, 410], [1160, 485], [1190, 502], [1230, 475], [1262, 452], [1305, 510], [1335, 523], [1380, 508], [1450, 512], [1477, 503], [1545, 530]]), ...R([[0, 520], [25, 534], [75, 518], [105, 482], [128, 463], [150, 475], [190, 433], [212, 446], [255, 455], [275, 448], [312, 472], [337, 452], [360, 485], [380, 496], [420, 478], [465, 500], [484, 490], [528, 518], [548, 505], [570, 510], [600, 494], [635, 494], [697, 456], [720, 484], [760, 510], [780, 504], [820, 504], [845, 492], [910, 505], [928, 518], [948, 496], [1000, 496], [1075, 514], [1130, 516], [1160, 526], [1200, 526], [1225, 518], [1245, 524], [1270, 550], [1285, 558], [1325, 530]])], '#ddd', 1);
  text(s, 1249, 640, '机构卖', '#e8e800');
  rect(s, 1284, 620, 64, 30, '#000');
  seg(s, AX, 615, AX, 655, '#a00000', 1);
  cursor(s, 606, 664);
}

/* Panel 6: chip monitor */
{
  const s = $('plot6'), L = block(0, 2.45, 475), R = block(640, 2.178, 475);
  frame(s, 664, 724, [[706.5, '30.00']]);
  seg(s, AX, 683, AX + 7, 683, '#a00', 1);
  text(s, 1340, 689, '60.00', '#e03030', 15, 'end');
  const top = [...L([[5, 710], [385, 710], [400, 715], [1050, 715], [1130, 700], [1240, 690], [1380, 682], [1568, 680]]), ...R([[100, 680], [230, 655], [370, 648], [700, 640], [1325, 638]])];
  const blue = [...L([[5, 728], [120, 724], [300, 728], [500, 722], [700, 720], [840, 726], [1020, 724], [1080, 712], [1130, 698], [1160, 695], [1200, 698], [1262, 686], [1350, 698], [1568, 710]]), ...R([[70, 710], [150, 690], [250, 658], [400, 662], [520, 670], [640, 662], [680, 645], [697, 640], [760, 662], [880, 655], [928, 664], [1050, 660], [1150, 672], [1240, 676], [1285, 693], [1325, 690]])];
  const low = [...L([[5, 740], [1568, 740]]), ...R([[180, 735], [230, 730], [400, 715], [700, 712], [950, 705], [1200, 700], [1260, 695], [1325, 705]])];
  poly(s, [...top, ...[...low].reverse()], '#f00');
  poly(s, [...blue, ...[...low].reverse()], '#0a98ff');
  poly(s, L([[1060, 724], [1110, 712], [1165, 698], [1262, 690], [1310, 700], [1200, 724], [1120, 730]]), '#ffb818');
  poly(s, L([[1165, 722], [1200, 700], [1262, 692], [1200, 722]]), '#d070ff');
  poly(s, R([[130, 705], [190, 680], [280, 662], [330, 668], [270, 695], [180, 716]]), '#ffb818');
  poly(s, R([[160, 705], [220, 680], [250, 675], [200, 706]]), '#d070ff');
  poly(s, R([[1240, 672], [1325, 666], [1325, 688], [1290, 690]]), '#ffb818');
  line(s, L([[1050, 718], [1150, 716], [1175, 700], [1240, 690]]), '#f00', 2);
  line(s, L([[1140, 722], [1165, 702], [1250, 688], [1400, 690], [1568, 696]]), '#0e0', 1.5);
  line(s, R([[5, 697], [130, 700], [200, 672], [330, 652], [420, 655]]), '#d070ff', 1.5);
  line(s, R([[720, 645], [850, 648], [1000, 655], [1150, 655]]), '#0e0', 1.5);
  line(s, R([[510, 659], [640, 658], [700, 655]]), '#0e0', 1.5);
  line(s, R([[1240, 672], [1325, 670]]), '#0e0', 1.2);
  line(s, R([[1280, 658], [1325, 657]]), '#d070ff', 1.5);
  line(s, low, '#0ff', 2);
  line(s, blue, '#0000f0', 2);
  [187, 206.5, 245, 284, 352, 428].forEach(x => poly(s, [[x - 5, 717], [x + 5, 717], [x + 2, 720], [x + 5, 724], [x - 5, 724], [x - 2, 720]], '#f5e07a'));
  [[505.5, 716], [699, 716], [717.5, 714], [757, 708], [795, 702], [950.5, 702]].forEach(p => bag(s, p[0], p[1]));
  cursor(s, 682, 724);
}

/* Panel 7: state grid */
{
  const s = $('plot7');
  frame(s, 724, 811, []);
  seg(s, AX, 768, AX + 7, 768, '#a00', 1);
  text(s, 1340, 774, '0.00', '#e03030', 15, 'end');
  const l = v => r1(v / 2.45), r = v => r1(640 + v / 2.178);
  const rows = [
    [747, 12, [[l(255), l(301)], [l(777), l(871)], [l(920), l(1037)], [l(1346), r(95)], [r(517), r(600)], [r(769), r(853)], [r(875), r(980)], [r(1003), 1253]]],
    [760, 13, [[0, l(65)]]],
    [775, 13, [[l(800), l(871)], [l(895), l(1083)], [l(1320), r(138)], [r(517), r(641)], [r(750), 1253]]],
    [790, 13, [[l(160), l(326)], [l(540), l(610)], [l(730), l(848)], [l(943), l(1037)], [l(1180), l(1227)], [l(1275), l(1463)], [l(1510), r(75)], [r(305), r(325)], [r(347), r(580)], [r(727), r(853)], [r(896), r(939)], [r(1043), r(1212)], [r(1234), r(1297)]]]
  ];
  rows.forEach(([y, h, green]) => { rect(s, 0, y, 1253, h, '#f00'); green.forEach(([a, b]) => rect(s, a, y, b - a, h, '#0f0')); });
  const strip = (a, b, c) => rect(s, a, 805, b - a, 5, c);
  strip(l(90), l(632), '#ff0'); strip(l(632), l(775), '#f88'); strip(l(775), l(1037), '#ff0'); strip(l(1037), l(1535), '#f88');
  strip(l(1535), r(347), '#ff0'); strip(r(347), r(853), '#f88'); strip(r(853), r(1147), '#ff0');
  [[0, l(182)], [l(350), l(540)], [l(590), l(632)], [l(685), l(728)], [l(1037), l(1180)], [l(1227), l(1297)], [r(95), r(347)], [r(665), r(725)]].forEach(([a, b]) => rect(s, a, 806.5, b - a, 2.5, '#f0f'));
  for (let x = 8.2; x < 1250; x += 9.66) seg(s, r1(x), 747, r1(x), 811, '#300000', 1.2);
  [['趋势', 760], ['量能', 773], ['中期', 787], ['短期', 801]].forEach(([t, y]) => text(s, 1252, y, t, '#e8e800'));
  cursor(s, 743, 811);
}

/* Panel 8: dealer control bars */
{
  const s = $('plot8'), L = block(0, 2.45, 720), R = block(640, 2.178, 720), base = 866;
  frame(s, 811, 881, [[839.5, '40.00']]);
  el(s, 'rect', { x: 1285, y: 812, width: 61, height: 67, fill: 'none', stroke: '#900', 'stroke-width': 2 });
  text(s, 0, 877, '淘宝店铺：股道侠知识铺', '#e8e800');
  const c = { r: '#f00', g: '#0f0', m: '#f0f', w: '#fff' };
  const bars = [...L([[10, 441, 'w'], [33, 433, 'r'], [56, 424, 'r'], [80, 416, 'm'], [103, 401, 'm'], [127, 387, 'm'], [150, 387, 'r'], [173, 390, 'g'], [197, 405, 'g'], [220, 408, 'g'], [244, 416, 'g'], [268, 420, 'g'], [291, 424, 'g'], [315, 424, 'r'], [339, 420, 'r'], [362, 416, 'm'], [386, 412, 'r'], [410, 413, 'm'], [433, 413, 'g'], [457, 408, 'm'], [480, 408, 'r'], [504, 408, 'm'], [528, 408, 'm'], [551, 416, 'g'], [575, 416, 'g'], [599, 416, 'g'], [622, 416, 'm'], [645, 416, 'g'], [669, 416, 'g'], [693, 412, 'm'], [716, 412, 'g'], [740, 416, 'g'], [763, 420, 'g'], [788, 428, 'g'], [858, 432, 'r'], [882, 428, 'r'], [905, 432, 'g'], [955, 445, 'w'], [978, 445, 'w'], [1002, 450, 'w'], [1025, 445, 'w'], [1048, 430, 'm'], [1072, 417, 'm'], [1096, 398, 'm'], [1120, 379, 'm'], [1143, 360, 'm'], [1167, 352, 'r'], [1190, 360, 'g'], [1214, 360, 'g'], [1238, 356, 'm'], [1262, 346, 'm'], [1286, 356, 'g'], [1309, 375, 'g'], [1333, 396, 'g'], [1357, 412, 'g'], [1380, 416, 'g'], [1404, 424, 'g'], [1428, 428, 'g'], [1451, 430, 'g'], [1475, 432, 'g'], [1522, 441, 'w'], [1545, 449, 'w']]),
    ...R([[3, 453, 'w'], [23, 457, 'w'], [43, 461, 'w'], [65, 461, 'w'], [86, 453, 'w'], [105, 441, 'w'], [128, 424, 'm'], [150, 412, 'm'], [169, 398, 'm'], [190, 379, 'm'], [212, 364, 'm'], [234, 356, 'r'], [253, 352, 'm'], [275, 346, 'm'], [296, 352, 'g'], [316, 360, 'g'], [337, 360, 'm'], [359, 375, 'g'], [381, 387, 'g'], [400, 394, 'g'], [422, 394, 'g'], [444, 402, 'g'], [465, 408, 'g'], [486, 412, 'g'], [507, 420, 'g'], [528, 428, 'g'], [548, 432, 'g'], [590, 434, 'r'], [612, 431, 'r'], [633, 431, 'g'], [654, 427, 'r'], [675, 420, 'm'], [697, 405, 'm'], [716, 405, 'g'], [738, 412, 'g'], [760, 424, 'g'], [780, 428, 'g'], [801, 431, 'g'], [822, 431, 'g'], [843, 431, 'r'], [864, 432, 'g'], [885, 434, 'g'], [928, 445, 'w'], [948, 441, 'w'], [1030, 441, 'w'], [1054, 441, 'w'], [1075, 445, 'w'], [1096, 449, 'w'], [1117, 449, 'w'], [1138, 453, 'w'], [1160, 457, 'w'], [1181, 457, 'w'], [1200, 457, 'w'], [1220, 457, 'w'], [1242, 461, 'w'], [1263, 465, 'w'], [1285, 474, 'w'], [1306, 479, 'w'], [1327, 479, 'w']])];
  bars.forEach(([x, y, t]) => rect(s, x - 4.5, Math.min(y, base), t === 'w' ? 9.7 : 9, Math.abs(base - y), c[t]));
  seg(s, 2, 865.7, CUR, 865.7, '#e8e800', 1.2);
  [12, 350, 428, 911].forEach(x => el(s, 'path', { d: `M${x - 5} 865L${x - 2} 862H${x + 2}L${x + 5} 865`, fill: 'none', stroke: '#e8e800' }));
  cursor(s, 830, 866);
}

/* Chip distribution */
{
  const s = $('chips'), R = block(1105, 2.8, 0), x0 = 1348;
  const steps = (pts, c) => poly(s, [[x0, pts[0][1]], ...pts, [x0, pts[pts.length - 1][1]]], c);
  steps(R([[682, 160], [690, 170], [715, 182], [722, 192], [712, 200], [702, 212], [715, 220], [745, 226], [785, 230], [868, 234], [955, 238], [1075, 241], [1165, 246], [1285, 249], [1420, 253], [1490, 257], [1440, 261], [1370, 264], [1310, 268], [1220, 272], [1165, 276], [1110, 280], [1075, 286], [1075, 290], [1130, 291], [1110, 297], [1050, 302], [1000, 306], [975, 310], [825, 313], [768, 317], [795, 321], [865, 325], [835, 330], [855, 334], [1000, 338], [1115, 340], [1240, 343], [1115, 346], [970, 348], [880, 354], [765, 358], [680, 364]]), '#fff');
  rect(s, x0, 97, 150, 2, '#7ff');
  seg(s, x0, 132, 1382, 132, '#aaa', 1.5);
  steps(R([[860, 405], [865, 409], [1010, 411], [1200, 414], [1075, 417], [890, 422], [760, 427], [680, 431]]), '#fff');
  steps(R([[830, 429], [900, 433], [835, 438], [820, 443], [860, 449], [920, 456], [855, 462], [800, 470], [745, 476], [690, 482]]), '#ff0');
  seg(s, x0, 205.7, 1637, 205.7, '#aaa', 1.5);
}

/* Notes over the charts */
{
  const s = $('notes'), c = '#ff3b3b';
  const at = (ox, kx, oy, pts) => poly(s, block(ox, kx, oy)(pts), c);
  at(0, 2.8, 0, [[128, 168], [206, 165], [195, 184], [328, 288], [178, 222], [168, 240]]);
  at(0, 2.8, 0, [[722, 150], [778, 160], [770, 180], [850, 270], [750, 196], [740, 210]]);
  at(0, 2.8, 0, [[1020, 66], [1093, 105], [1075, 122], [1154, 280], [1045, 145], [1024, 157]]);
  at(0, 2.45, 475, [[418, 397], [458, 403], [450, 418], [512, 483], [443, 428], [434, 442]]);
  at(640, 2.178, 475, [[1153, 330], [1275, 430], [1289, 412], [1315, 500], [1245, 488], [1258, 470]]);
  text(s, 801, 184, '潜龙出水，第2天开盘买', c, 39);
  poly($('pointer'), [[1490, 332], [1565, 365], [1572, 357], [1591, 392], [1551, 392], [1556, 383]], c);
}
```
